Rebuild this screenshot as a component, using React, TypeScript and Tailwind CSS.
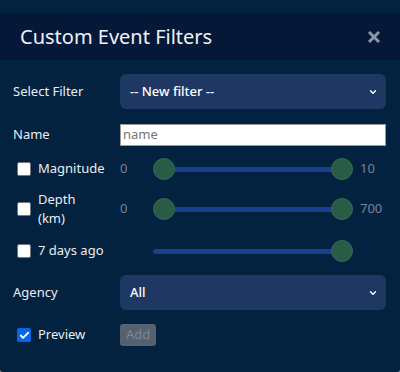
import { Check, ChevronDown } from 'lucide-react'

const font = { fontFamily: '"Noto Sans", "Open Sans", sans-serif' }

function Box({ checked = false }: { checked?: boolean }) {
  if (checked) {
    return (
      <span className="flex w-[14px] h-[14px] shrink-0 items-center justify-center rounded-[2px] bg-[#0b64e3]">
        <Check className="w-[11px] h-[11px] text-white" strokeWidth={4} />
      </span>
    )
  }
  return <span className="block w-[14px] h-[14px] shrink-0 rounded-[2px] border border-[#767676] bg-white" />
}

function ThumbAt({ left }: { left: number }) {
  return (
    <span
      className="absolute top-0 h-[22px] w-[22px] rounded-full bg-[#285c46] border border-[#386a56]"
      style={{ left }}
    />
  )
}

function Range({ min, max, low = true }: { min?: string; max?: string; low?: boolean }) {
  return (
    <div className="flex items-center">
      <span className="w-[33px] text-[13px] text-[#76859a]">{min}</span>
      <div className="relative h-[22px] w-[200px]">
        <div className="absolute right-[11px] top-[9px] h-[5px] rounded-full bg-[#1b3f90]" style={{ left: low ? 11 : 0 }} />
        {low && <ThumbAt left={0} />}
        <ThumbAt left={178} />
      </div>
      <span className="ml-[7px] text-[13px] text-[#76859a]">{max}</span>
    </div>
  )
}

function Select({ label }: { label: string }) {
  return (
    <div className="flex h-[35px] w-[266px] items-center justify-between rounded-[6px] bg-[#1f3763] pl-[10px] pr-[8px] text-[13px] font-medium text-white">
      <span>{label}</span>
      <ChevronDown className="w-[10px] h-[10px]" strokeWidth={3.5} />
    </div>
  )
}

export default function App() {
  return (
    <div className="w-[400px] h-[372px] bg-[#8a8f96]" style={font}>
      <div className="h-full rounded-b-[3px] bg-[#03223f] pt-[13px] text-[13px] text-[#e9eef4]">
        <div className="flex h-[47px] items-center justify-between bg-[#061838] pl-[20px] pr-[19px]">
          <h1 className="text-[20px] leading-none text-[#eef2f7]">Custom Event Filters</h1>
          <svg width="14" height="14" viewBox="0 0 14 14" className="text-[#8d96a8]">
            <path d="M2 2L12 12M12 2L2 12" stroke="currentColor" strokeWidth="3" />
          </svg>
        </div>

        <div className="pl-[13px] pt-[13px]">
          <div className="mt-[1px] flex items-center">
            <span className="w-[107px]">Select Filter</span>
            <Select label="-- New filter --" />
          </div>

          <div className="mt-[15px] flex items-center">
            <span className="w-[107px]">Name</span>
            <div className="flex h-[22px] w-[266px] items-center border border-[#9a9a9a] bg-white pl-[2px] text-[13px] text-[#767676]">
              name
            </div>
          </div>

          <div className="mt-[11px] flex h-[24px] items-center">
            <div className="flex w-[107px] items-center gap-[7px] pl-[4px]">
              <Box />
              <span>Magnitude</span>
            </div>
            <Range min="0" max="10" />
          </div>

          <div className="mt-[9px] flex h-[38px] items-center">
            <div className="flex w-[107px] items-center gap-[7px] pl-[4px]">
              <Box />
              <span className="leading-[19px]">Depth<br />(km)</span>
            </div>
            <Range min="0" max="700" />
          </div>

          <div className="mt-[11px] flex h-[24px] items-center">
            <div className="flex w-[107px] items-center gap-[7px] pl-[4px]">
              <Box />
              <span>7 days ago</span>
            </div>
            <Range low={false} />
          </div>

          <div className="mt-[12px] flex items-center">
            <span className="w-[107px]">Agency</span>
            <Select label="All" />
          </div>

          <div className="mt-[14px] flex items-center">
            <div className="flex w-[107px] items-center gap-[7px] pl-[4px]">
              <Box checked />
              <span>Preview</span>
            </div>
            <button className="h-[22px] rounded-[3px] bg-[#56616f] px-[6px] text-[13px] text-[#7c8794]">Add</button>
          </div>
        </div>
      </div>
    </div>
  )
}
